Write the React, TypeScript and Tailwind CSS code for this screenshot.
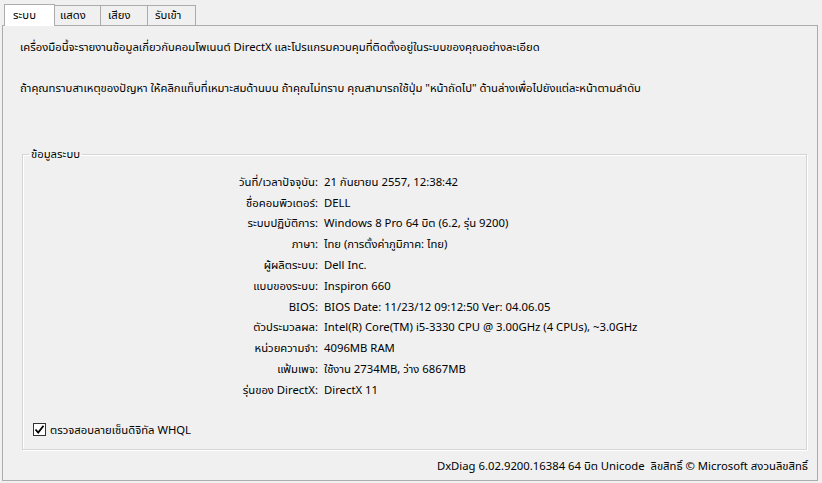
import React from "react";

const rows: [string, string][] = [
  ["วันที่/เวลาปัจจุบัน:", "21 กันยายน 2557, 12:38:42"],
  ["ชื่อคอมพิวเตอร์:", "DELL"],
  ["ระบบปฏิบัติการ:", "Windows 8 Pro 64 บิต (6.2, รุ่น 9200)"],
  ["ภาษา:", "ไทย (การตั้งค่าภูมิภาค: ไทย)"],
  ["ผู้ผลิตระบบ:", "Dell Inc."],
  ["แบบของระบบ:", "Inspiron 660"],
  ["BIOS:", "BIOS Date: 11/23/12 09:12:50 Ver: 04.06.05"],
  ["ตัวประมวลผล:", "Intel(R) Core(TM) i5-3330 CPU @ 3.00GHz (4 CPUs), ~3.0GHz"],
  ["หน่วยความจำ:", "4096MB RAM"],
  ["แฟ้มเพจ:", "ใช้งาน 2734MB, ว่าง 6867MB"],
  ["รุ่นของ DirectX:", "DirectX 11"],
];

const tabs = ["แสดง", "เสียง", "รับเข้า"];
const tabW = ["w-[46px]", "w-[47px]", "w-[48px]"];
const tabPl = ["pl-[5px]", "pl-[7px]", "pl-[7px]"];

export default function App() {
  return (
    <div
      className="w-[822px] h-[483px] bg-[#f0f0f0] overflow-hidden text-[11.3px] text-black leading-none"
      style={{ fontFamily: '"Segoe UI", "Noto Sans", "Noto Sans Thai", "DejaVu Sans", sans-serif' }}
    >
      {/* tab strip */}
      <div className="flex items-end h-[26px] pl-[4px] pt-[4px] relative z-10">
        <div className="w-[51px] h-[22px] bg-white border border-[#acacac] border-b-0 flex items-start pl-[8px] pt-[4px]">
          ระบบ
        </div>
        {tabs.map((t, i) => (
          <div
            key={t}
            className={`${tabW[i]} ${tabPl[i]} h-[20px] bg-[#f0f0f0] border border-[#acacac] border-l-0 border-b-0 flex items-start pt-[3px] mb-[1px]`}
          >
            {t}
          </div>
        ))}
      </div>
      {/* panel */}
      <div className="ml-[2px] w-[816px] h-[456px] -mt-[1px] border border-[#acacac] bg-[#f0f0f0] flex flex-col">
        <div className="pl-[17px] pt-[7px] h-[34px] flex items-center">
          เครื่องมือนี้จะรายงานข้อมูลเกี่ยวกับคอมโพเนนต์ DirectX และโปรแกรมควบคุมที่ติดตั้งอยู่ในระบบของคุณอย่างละเอียด
        </div>
        <div className="pl-[17px] pt-[19px] h-[37px] flex items-center">
          ถ้าคุณทราบสาเหตุของปัญหา ให้คลิกแท็บที่เหมาะสมด้านบน ถ้าคุณไม่ทราบ คุณสามารถใช้ปุ่ม "หน้าถัดไป" ด้านล่างเพื่อไปยังแต่ละหน้าตามลำดับ
        </div>
        <fieldset className="ml-[19px] mt-[50px] w-[785px] h-[303px] border border-[#d5d5d5] shadow-[inset_1px_1px_0_#ffffff,1px_1px_0_#ffffff] px-0 pt-[10px] m-0 min-w-0 shrink-0">
          <legend className="ml-[6px] px-[2px] leading-[14px]">ข้อมูลระบบ</legend>
          <div className="grid grid-cols-[295px_1fr] gap-x-[6px]">
            {rows.map(([k, v]) => (
              <React.Fragment key={k}>
                <div className="h-[20.8px] flex items-center justify-end">{k}</div>
                <div className="h-[20.8px] flex items-center">{v}</div>
              </React.Fragment>
            ))}
          </div>
          <div className="flex items-center gap-[4px] ml-[10px] mt-[23px]">
            <div className="w-[13px] h-[13px] border border-[#333] bg-white flex items-center justify-center">
              <svg width="11" height="11" viewBox="0 0 11 11">
                <path d="M1.5 5.5 L4.2 8.5 L9.5 1.8" fill="none" stroke="#000" strokeWidth="1.8" />
              </svg>
            </div>
            <span>ตรวจสอบลายเซ็นดิจิทัล WHQL</span>
          </div>
        </fieldset>
        <div className="flex justify-end pr-[9px] mt-[9px] h-[14px] items-center">
          DxDiag 6.02.9200.16384 64 บิต Unicode&nbsp; ลิขสิทธิ์ © Microsoft สงวนลิขสิทธิ์
        </div>
      </div>
    </div>
  );
}
